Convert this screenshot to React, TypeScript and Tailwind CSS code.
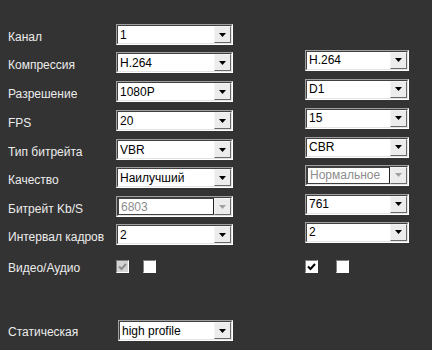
import React from "react";

type ComboProps = {
  value: string;
  width: string;
  disabled?: boolean;
  lift?: boolean;
};

function Arrow({ disabled }: { disabled?: boolean }) {
  return (
    <svg width="7" height="4" viewBox="0 0 7 4">
      <path d="M0 0H7L3.5 4Z" fill={disabled ? "#a0a0a0" : "#000"} />
    </svg>
  );
}

function Combo({ value, width, disabled, lift }: ComboProps) {
  return (
    <div
      className={`${width} ${lift ? "mb-[5px]" : ""} flex h-[21px] border border-t-[#a0a0a0] border-l-[#a0a0a0] border-r-white border-b-white`}
    >
      <div className="flex flex-1 border border-t-[#404040] border-l-[#404040] border-r-[#e3e3e3] border-b-[#e3e3e3] bg-white">
        <span
          className={`flex flex-1 items-center pl-[2px] text-[12px] leading-none ${
            disabled ? "text-[#8c8c8c] border border-[#404040] border-r-[#202020]" : "text-black"
          }`}
        >
          {value}
        </span>
        <div className="flex w-[17px] items-center justify-center border border-t-[#f4f4f4] border-l-[#f4f4f4] border-r-[#696969] border-b-[#696969] bg-[#ececec]">
          <Arrow disabled={disabled} />
        </div>
      </div>
    </div>
  );
}

function Check({ checked, disabled }: { checked?: boolean; disabled?: boolean }) {
  return (
    <div
      className={`flex h-[13px] w-[13px] items-center justify-center border border-t-[#808080] border-l-[#808080] border-r-white border-b-white ${
        disabled ? "bg-[#d4d4d4]" : "bg-white"
      }`}
    >
      {checked && (
        <svg width="9" height="8" viewBox="0 0 9 8">
          <path
            d="M1 3.5L3.5 6L8 1"
            fill="none"
            stroke={disabled ? "#8c8c8c" : "#000"}
            strokeWidth="2"
          />
        </svg>
      )}
    </div>
  );
}

const rows = [
  { label: "Канал", left: "1", right: null, mt: "mt-[24px]" },
  { label: "Компрессия", left: "H.264", right: "H.264", mt: "mt-[7px]" },
  { label: "Разрешение", left: "1080P", right: "D1", mt: "mt-[8px]" },
  { label: "FPS", left: "20", right: "15", mt: "mt-[8px]" },
  { label: "Тип битрейта", left: "VBR", right: "CBR", mt: "mt-[8px]" },
  { label: "Качество", left: "Наилучший", right: "Нормальное", mt: "mt-[7px]", rightDisabled: true },
  { label: "Битрейт Kb/S", left: "6803", right: "761", mt: "mt-[8px]", leftDisabled: true },
  { label: "Интервал кадров", left: "2", right: "2", mt: "mt-[7px]" },
];

export default function App() {
  return (
    <div
      className="flex h-[350px] w-[432px] flex-col bg-[#333333] text-[12px] text-[#ececec]"
      style={{ fontFamily: "'Liberation Sans', Arial, sans-serif" }}
    >
      {rows.map((r) => (
        <div key={r.label} className={`${r.mt} flex h-[21px] items-center`}>
          <span className="w-[116px] pl-[8px] pt-[4px]">{r.label}</span>
          <Combo value={r.left} width="w-[117px]" disabled={r.leftDisabled} />
          {r.right && (
            <>
              <div className="w-[72px]" />
              <Combo value={r.right} width="w-[104px]" disabled={r.rightDisabled} lift />
            </>
          )}
        </div>
      ))}
      <div className="mt-[14px] flex h-[15px] items-center">
        <span className="w-[116px] pl-[8px] pt-[2px]">Видео/Аудио</span>
        <div className="flex w-[189px] gap-[14px]">
          <Check checked disabled />
          <Check />
        </div>
        <div className="flex gap-[18px]">
          <Check checked />
          <Check />
        </div>
      </div>
      <div className="mt-[46px] flex h-[21px] items-center">
        <span className="w-[118px] pl-[8px] pt-[2px]">Статическая</span>
        <Combo value="high profile" width="w-[115px]" />
      </div>
    </div>
  );
}
